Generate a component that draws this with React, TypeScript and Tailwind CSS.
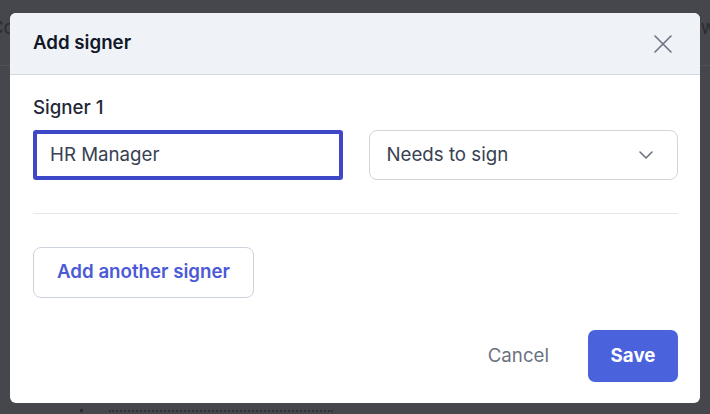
import React from 'react';

const font = { fontFamily: 'Inter, "Noto Sans", sans-serif' };

function CloseIcon() {
  return (
    <svg width="20" height="20" viewBox="0 0 20 20" fill="none" stroke="#6b7280" strokeWidth="1.6" strokeLinecap="round">
      <path d="M2 2 18 18" />
      <path d="M18 2 2 18" />
    </svg>
  );
}

function Chevron() {
  return (
    <svg width="14" height="8" viewBox="0 0 14 8" fill="none" stroke="#6b7280" strokeWidth="1.6" strokeLinecap="round" strokeLinejoin="round">
      <path d="M1 1l6 6 6-6" />
    </svg>
  );
}

export default function App() {
  return (
    <div className="relative w-[710px] h-[414px] overflow-hidden bg-[#45474c]" style={font}>
      {/* page behind the overlay */}
      <div className="flex flex-col h-full">
        <div className="h-[66px] border-b border-[#505257] flex items-start justify-between pt-[16px]">
          <span className="text-[18.5px] leading-[22px] text-[#2a2c30] -ml-[10px]">Co</span>
          <span className="text-[18.5px] leading-[22px] text-[#2a2c30] -mr-[6px]">w</span>
        </div>
        <div className="flex-1" />
        <div className="flex items-center gap-[26px] pl-[80px] pb-[2px]">
          <span className="w-[3px] h-[3px] bg-[#2a2c30]" />
          <span className="w-[224px] border-t-2 border-dotted border-[#2f3135]" />
        </div>
      </div>

      {/* dialog */}
      <div className="absolute left-[10px] top-[13px] w-[690px] h-[390px] bg-white rounded-[6px] overflow-hidden flex flex-col">
        <div className="h-[62px] shrink-0 bg-[#eff2f7] border-b border-[#d3d8e0] flex items-center justify-between pl-[23px] pr-[27px]">
          <h2 className="text-[18.7px] font-semibold text-[#111827]">Add signer</h2>
          <button className="flex items-center justify-center">
            <CloseIcon />
          </button>
        </div>

        <div className="flex-1 flex flex-col pl-[23px] pr-[22px] pt-[21px] pb-[21px]">
          <label className="text-[18.7px] leading-[24px] font-medium text-[#1f2937]">Signer 1</label>
          <div className="grid grid-cols-2 gap-[26px] mt-[10px]">
            <div className="h-[50px] border-[4px] border-[#3f47c9] rounded-[3px] flex items-center px-[13px]">
              <span className="text-[18.7px] text-[#374151]">HR Manager</span>
            </div>
            <div className="h-[50px] border border-[#d1d5db] rounded-[8px] flex items-center justify-between pl-[17px] pr-[24px]">
              <span className="text-[18.7px] text-[#374151]">Needs to sign</span>
              <Chevron />
            </div>
          </div>

          <div className="border-t border-[#e5e7eb] mt-[33px]" />

          <div className="mt-[33px]">
            <button className="h-[51px] w-[221px] border border-[#cdd3de] rounded-[8px] text-[18.7px] font-semibold text-[#4b5ad6]">
              Add another signer
            </button>
          </div>

          <div className="flex-1" />

          <div className="flex items-center justify-end gap-[19px]">
            <button className="px-[20px] h-[52px] text-[18.7px] text-[#6b7280]">Cancel</button>
            <button className="w-[90px] h-[52px] rounded-[7px] bg-[#4b62dd] text-white text-[18.7px] font-bold">Save</button>
          </div>
        </div>
      </div>
    </div>
  );
}
